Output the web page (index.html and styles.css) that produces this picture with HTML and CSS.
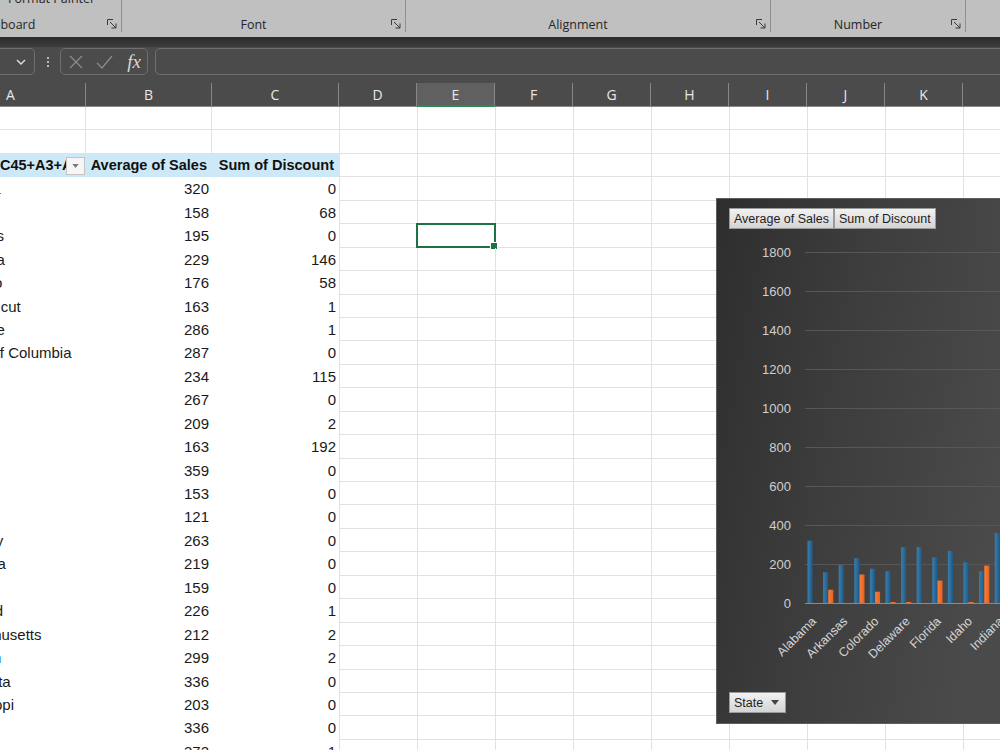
FILE: index.html
```html
<!DOCTYPE html>
<html lang="en">

<head>
	<meta charset="utf-8">
	<title>Sales by State - Pivot</title>
	<link rel="stylesheet" href="styles.css">
</head>

<body>
	<!-- ribbon (bottom part only) -->
	<div class="ribbon">
		<div class="group clipboard">
			<span class="cmd">Format Painter</span>
			<div class="glabel"><span>Clipboard</span>
				<svg class="launcher" viewBox="0 0 10 10"><path d="M0.5 6V0.5H6" /><path d="M3 3L9 9M9 4.5V9H4.5" /></svg>
			</div>
		</div>
		<div class="group font">
			<div class="glabel"><span>Font</span>
				<svg class="launcher" viewBox="0 0 10 10"><path d="M0.5 6V0.5H6" /><path d="M3 3L9 9M9 4.5V9H4.5" /></svg>
			</div>
		</div>
		<div class="group align">
			<div class="glabel"><span>Alignment</span>
				<svg class="launcher" viewBox="0 0 10 10"><path d="M0.5 6V0.5H6" /><path d="M3 3L9 9M9 4.5V9H4.5" /></svg>
			</div>
		</div>
		<div class="group number">
			<div class="glabel"><span>Number</span>
				<svg class="launcher" viewBox="0 0 10 10"><path d="M0.5 6V0.5H6" /><path d="M3 3L9 9M9 4.5V9H4.5" /></svg>
			</div>
		</div>
		<div class="group styles"></div>
	</div>
	<div class="band"></div>

	<!-- formula bar -->
	<div class="fbar">
		<div class="namebox">
			<svg class="chev" viewBox="0 0 10 6"><path d="M1 1L5 5L9 1" /></svg>
		</div>
		<div class="fdots"><i></i><i></i><i></i></div>
		<div class="fbtns">
			<svg class="ficon" viewBox="0 0 18 18"><path d="M3 3L15 15M15 3L3 15" /></svg>
			<svg class="ficon" viewBox="0 0 18 18"><path d="M2 10L7 15L17 3" /></svg>
			<span class="fx">fx</span>
		</div>
		<div class="finput"></div>
	</div>

	<!-- column headers -->
	<div class="colheads">
		<div class="ch wa">A</div>
		<div class="ch wb">B</div>
		<div class="ch wc">C</div>
		<div class="ch">D</div>
		<div class="ch active">E</div>
		<div class="ch">F</div>
		<div class="ch">G</div>
		<div class="ch">H</div>
		<div class="ch">I</div>
		<div class="ch">J</div>
		<div class="ch">K</div>
		<div class="ch"></div>
	</div>

	<div class="sheet">
		<div class="row blank"><div class="cell"></div><div class="cell"></div><div class="cell"></div><div class="rest"></div></div>
		<div class="row blank"><div class="cell"></div><div class="cell"></div><div class="cell"></div><div class="rest"></div></div>
		<div class="row head">
			<div class="cell hcell"><span class="hlabel">C45+A3+A4</span><span class="filter"><svg viewBox="0 0 8 5"><path d="M0 0H8L4 5Z" /></svg></span></div>
			<div class="cell num">Average of Sales</div>
			<div class="cell num">Sum of Discount</div>
			<div class="rest"></div>
		</div>
		<div class="row"><div class="cell name">Alabama</div><div class="cell num">320</div><div class="cell num">0</div><div class="rest"></div></div>
		<div class="row"><div class="cell name">Arizona</div><div class="cell num">158</div><div class="cell num">68</div><div class="rest"></div></div>
		<div class="row"><div class="cell name">Arkansas</div><div class="cell num">195</div><div class="cell num">0</div><div class="rest"><div class="sel"></div></div></div>
		<div class="row"><div class="cell name">California</div><div class="cell num">229</div><div class="cell num">146</div><div class="rest"></div></div>
		<div class="row"><div class="cell name">Colorado</div><div class="cell num">176</div><div class="cell num">58</div><div class="rest"></div></div>
		<div class="row"><div class="cell name">Connecticut</div><div class="cell num">163</div><div class="cell num">1</div><div class="rest"></div></div>
		<div class="row"><div class="cell name">Delaware</div><div class="cell num">286</div><div class="cell num">1</div><div class="rest"></div></div>
		<div class="row"><div class="cell name">District of Columbia</div><div class="cell num">287</div><div class="cell num">0</div><div class="rest"></div></div>
		<div class="row"><div class="cell name">Florida</div><div class="cell num">234</div><div class="cell num">115</div><div class="rest"></div></div>
		<div class="row"><div class="cell name">Georgia</div><div class="cell num">267</div><div class="cell num">0</div><div class="rest"></div></div>
		<div class="row"><div class="cell name">Idaho</div><div class="cell num">209</div><div class="cell num">2</div><div class="rest"></div></div>
		<div class="row"><div class="cell name">Illinois</div><div class="cell num">163</div><div class="cell num">192</div><div class="rest"></div></div>
		<div class="row"><div class="cell name">Indiana</div><div class="cell num">359</div><div class="cell num">0</div><div class="rest"></div></div>
		<div class="row"><div class="cell name">Iowa</div><div class="cell num">153</div><div class="cell num">0</div><div class="rest"></div></div>
		<div class="row"><div class="cell name">Kansas</div><div class="cell num">121</div><div class="cell num">0</div><div class="rest"></div></div>
		<div class="row"><div class="cell name">Kentucky</div><div class="cell num">263</div><div class="cell num">0</div><div class="rest"></div></div>
		<div class="row"><div class="cell name">Louisiana</div><div class="cell num">219</div><div class="cell num">0</div><div class="rest"></div></div>
		<div class="row"><div class="cell name">Maine</div><div class="cell num">159</div><div class="cell num">0</div><div class="rest"></div></div>
		<div class="row"><div class="cell name">Maryland</div><div class="cell num">226</div><div class="cell num">1</div><div class="rest"></div></div>
		<div class="row"><div class="cell name">Massachusetts</div><div class="cell num">212</div><div class="cell num">2</div><div class="rest"></div></div>
		<div class="row"><div class="cell name link">Michigan</div><div class="cell num">299</div><div class="cell num">2</div><div class="rest"></div></div>
		<div class="row"><div class="cell name">Minnesota</div><div class="cell num">336</div><div class="cell num">0</div><div class="rest"></div></div>
		<div class="row"><div class="cell name">Mississippi</div><div class="cell num">203</div><div class="cell num">0</div><div class="rest"></div></div>
		<div class="row"><div class="cell name">Missouri</div><div class="cell num">336</div><div class="cell num">0</div><div class="rest"></div></div>
		<div class="row"><div class="cell name">Montana</div><div class="cell num">372</div><div class="cell num">1</div><div class="rest"></div></div>

		<!-- pivot chart floating over the grid -->
		<div class="chart">
			<svg class="plot" width="300" height="526" viewBox="0 0 300 526">
				<defs>
					<linearGradient id="gBlue" x1="0" x2="1" y1="0" y2="0">
						<stop offset="0" stop-color="#3a7fae" />
						<stop offset="1" stop-color="#1d5a86" />
					</linearGradient>
					<linearGradient id="gOrange" x1="0" x2="1" y1="0" y2="0">
						<stop offset="0" stop-color="#fb7d3c" />
						<stop offset="1" stop-color="#e4621f" />
					</linearGradient>
				</defs>
				<g class="gridlines">
					<line x1="88" x2="300" y1="53.5" y2="53.5" />
					<line x1="88" x2="300" y1="92.5" y2="92.5" />
					<line x1="88" x2="300" y1="131.5" y2="131.5" />
					<line x1="88" x2="300" y1="170.5" y2="170.5" />
					<line x1="88" x2="300" y1="209.5" y2="209.5" />
					<line x1="88" x2="300" y1="248.5" y2="248.5" />
					<line x1="88" x2="300" y1="287.5" y2="287.5" />
					<line x1="88" x2="300" y1="326.5" y2="326.5" />
					<line x1="88" x2="300" y1="365.5" y2="365.5" />
				</g>
				<g class="ylab">
					<text x="74" y="58">1800</text>
					<text x="74" y="97">1600</text>
					<text x="74" y="136">1400</text>
					<text x="74" y="175">1200</text>
					<text x="74" y="214">1000</text>
					<text x="74" y="253">800</text>
					<text x="74" y="292">600</text>
					<text x="74" y="331">400</text>
					<text x="74" y="370">200</text>
					<text x="74" y="409">0</text>
				</g>
				<g fill="url(#gBlue)">
					<rect x="90.5" y="341.6" width="5" height="62.4" />
					<rect x="106.1" y="373.2" width="5" height="30.8" />
					<rect x="121.7" y="366" width="5" height="38" />
					<rect x="137.3" y="359.3" width="5" height="44.7" />
					<rect x="152.9" y="369.7" width="5" height="34.3" />
					<rect x="168.5" y="372.2" width="5" height="31.8" />
					<rect x="184.1" y="348.2" width="5" height="55.8" />
					<rect x="199.7" y="348" width="5" height="56" />
					<rect x="215.3" y="358.4" width="5" height="45.6" />
					<rect x="230.9" y="351.9" width="5" height="52.1" />
					<rect x="246.5" y="363.2" width="5" height="40.8" />
					<rect x="262.1" y="372.2" width="5" height="31.8" />
					<rect x="277.7" y="334" width="5" height="70" />
				</g>
				<g fill="url(#gOrange)">
					<rect x="111.3" y="390.7" width="5" height="13.3" />
					<rect x="142.5" y="375.5" width="5" height="28.5" />
					<rect x="158.1" y="392.7" width="5" height="11.3" />
					<rect x="173.7" y="403" width="5" height="1" />
					<rect x="189.3" y="403" width="5" height="1" />
					<rect x="220.5" y="381.6" width="5" height="22.4" />
					<rect x="251.7" y="403" width="5" height="1" />
					<rect x="267.3" y="366.6" width="5" height="37.4" />
				</g>
				<line class="axis" x1="88" x2="300" y1="404.5" y2="404.5" />
				<g class="xlab">
					<text x="100" y="423" transform="rotate(-45 100 423)">Alabama</text>
					<text x="131.2" y="423" transform="rotate(-45 131.2 423)">Arkansas</text>
					<text x="162.4" y="423" transform="rotate(-45 162.4 423)">Colorado</text>
					<text x="193.6" y="423" transform="rotate(-45 193.6 423)">Delaware</text>
					<text x="224.8" y="423" transform="rotate(-45 224.8 423)">Florida</text>
					<text x="256" y="423" transform="rotate(-45 256 423)">Idaho</text>
					<text x="287.2" y="423" transform="rotate(-45 287.2 423)">Indiana</text>
				</g>
			</svg>
			<div class="fields">
				<span class="fbtn">Average of Sales</span>
				<span class="fbtn">Sum of Discount</span>
			</div>
			<span class="fbtn state">State
				<svg viewBox="0 0 8 5"><path d="M0 0H8L4 5Z" /></svg>
			</span>
		</div>
	</div>
</body>

</html>
```

FILE: styles.css
```css
* {
	box-sizing: border-box;
}

html,
body {
	width: 1000px;
	height: 750px;
	overflow: hidden;
	margin: 0;
	padding: 0;
}

body {
	background-color: #ffffff;
	color: #1a1a1a;
	font-family: "Liberation Sans", Arial, sans-serif;
}

/* ribbon */
.ribbon {
	display: flex;
	height: 37px;
	margin-left: -87px;
	padding-bottom: 5px;
	background-color: #c0c0c0;
	font-family: "Open Sans", sans-serif;
	color: #262626;
	overflow: hidden;
}

.group {
	display: flex;
	flex-direction: column;
	height: 32px;
	border-right: 1px solid #8f8f8f;
}

.clipboard {
	width: 209px;
}

.font {
	width: 284px;
}

.align {
	width: 365px;
}

.number {
	width: 195px;
}

.styles {
	flex: 1;
	border: none;
}

.cmd {
	margin-top: -9px;
	padding-left: 95px;
	font-size: 12.5px;
	line-height: 16px;
}

.glabel {
	display: flex;
	align-items: center;
	height: 16px;
	margin-top: auto;
	padding-right: 4px;
}

.glabel span {
	flex: 1;
	text-align: center;
	font-size: 12.5px;
}

.launcher {
	width: 10px;
	height: 10px;
	margin-left: 6px;
	fill: none;
	stroke: #3a3a3a;
	stroke-width: 1;
}

.band {
	height: 10px;
	background: linear-gradient(#2b2b2b, #3d3d3d);
}

/* formula bar */
.fbar {
	display: flex;
	align-items: flex-start;
	height: 30px;
	margin-left: -40px;
	padding-top: 1px;
	background-color: #4b4b4b;
}

.namebox,
.fbtns,
.finput {
	height: 27px;
	border: 1px solid #6f6f6f;
	border-radius: 5px;
}

.namebox {
	display: flex;
	align-items: center;
	justify-content: flex-end;
	width: 75px;
	padding-right: 8px;
}

.chev {
	width: 10px;
	height: 6px;
	fill: none;
	stroke: #e0e0e0;
	stroke-width: 1.4;
}

.fdots {
	display: flex;
	flex-direction: column;
	align-items: center;
	justify-content: center;
	gap: 2px;
	width: 25px;
	height: 27px;
}

.fdots i {
	width: 2px;
	height: 2px;
	border-radius: 1px;
	background-color: #e0e0e0;
}

.fbtns {
	display: flex;
	align-items: center;
	gap: 10px;
	width: 88px;
	padding-left: 6px;
}

.ficon {
	width: 18px;
	height: 18px;
	fill: none;
	stroke: #8c8c8c;
	stroke-width: 1.2;
}

.fx {
	width: 22px;
	font-family: "Liberation Serif", serif;
	font-style: italic;
	font-size: 19px;
	line-height: 24px;
	color: #d8d8d8;
	text-align: center;
}

.finput {
	flex: 1;
	margin-left: 7px;
	margin-right: -10px;
}

/* column headers */
.colheads {
	display: flex;
	height: 30px;
	margin-left: -60px;
	padding-top: 6px;
	background-color: #4b4b4b;
	font-family: "Open Sans", sans-serif;
}

.ch {
	flex: none;
	width: 78px;
	height: 24px;
	border-right: 1px solid #878787;
	border-bottom: 1px solid #8a8a8a;
	color: #e8e8e8;
	font-size: 14px;
	line-height: 23px;
	text-align: center;
}

.ch.wa {
	width: 146px;
	padding-right: 4px;
}

.ch.wb {
	width: 126px;
}

.ch.wc {
	width: 127px;
}

.ch.active {
	background-color: #606060;
	border-bottom: 2px solid #2a8a55;
}

/* grid */
.sheet {
	position: relative;
	margin-left: -60px;
}

.row {
	display: grid;
	grid-template-columns: 146px 126px 127px 1fr;
	height: 23.45px;
}

.cell {
	padding: 0 3px;
	font-size: 15px;
	line-height: 23px;
	white-space: nowrap;
	overflow: hidden;
}

.name {
	padding-left: 1.5px;
}

.name.link {
	color: #4a9ad6;
}

.num {
	text-align: right;
}

.row.blank .cell {
	border-bottom: 1px solid #e1e1e1;
}

.row.blank .cell:nth-child(1),
.row.blank .cell:nth-child(2) {
	border-right: 1px solid #e1e1e1;
}

.rest {
	position: relative;
	border-bottom: 1px solid #e1e1e1;
	background: repeating-linear-gradient(to right, #e1e1e1 0 1px, transparent 1px 78px);
}

.row.head .cell {
	background-color: #cde9f7;
	font-size: 14.5px;
	font-weight: bold;
	color: #111;
}

.row.head .num {
	padding-right: 5px;
}

.hcell {
	display: flex;
	align-items: center;
	padding: 0 1px 0 0;
}

.hlabel {
	flex: 1;
	overflow: hidden;
	padding-left: 60px;
}

.filter {
	display: flex;
	align-items: center;
	justify-content: center;
	width: 19px;
	height: 18px;
	background-color: #f6f6f6;
	border: 1px solid #c4c4c4;
}

.filter svg {
	width: 7px;
	height: 4px;
	fill: #7a7a7a;
}

.sel {
	position: absolute;
	left: 77px;
	top: -1px;
	width: 80px;
	height: 25px;
	border: 2px solid #1e7145;
}

.sel::after {
	content: "";
	position: absolute;
	right: -4px;
	bottom: -4px;
	width: 6px;
	height: 6px;
	background-color: #1e7145;
	border: 1px solid #ffffff;
}

/* chart */
.chart {
	position: absolute;
	left: 776px;
	top: 91px;
	display: flex;
	flex-direction: column;
	width: 300px;
	height: 526px;
	padding: 9px 12px 10px;
	border: 1px solid #5e5e5e;
	background: linear-gradient(100deg, #2e2e2e 0%, #3d3d3d 40%, #4a4a4a 85%);
}

.plot {
	position: absolute;
	left: 0;
	top: 0;
	font-family: "Liberation Sans", Arial, sans-serif;
}

.gridlines line {
	stroke: #575757;
	stroke-width: 1;
}

.axis {
	stroke: #8a8a8a;
	stroke-width: 1;
}

.ylab text {
	fill: #cfcfcf;
	font-size: 13px;
	text-anchor: end;
}

.xlab text {
	fill: #d4d4d4;
	font-size: 12.5px;
	text-anchor: end;
}

.fields {
	position: relative;
	display: flex;
}

.fbtn {
	position: relative;
	display: inline-flex;
	align-items: center;
	height: 21px;
	padding: 0 4px;
	border: 1px solid #9a9a9a;
	background: linear-gradient(#f2f2f2, #d4d4d4);
	color: #1e1e1e;
	font-size: 12.5px;
	white-space: nowrap;
}

.fbtn.state {
	align-self: flex-start;
	gap: 8px;
	width: 57px;
	margin-top: auto;
}

.fbtn.state svg {
	width: 8px;
	height: 5px;
	fill: #444;
}
```
